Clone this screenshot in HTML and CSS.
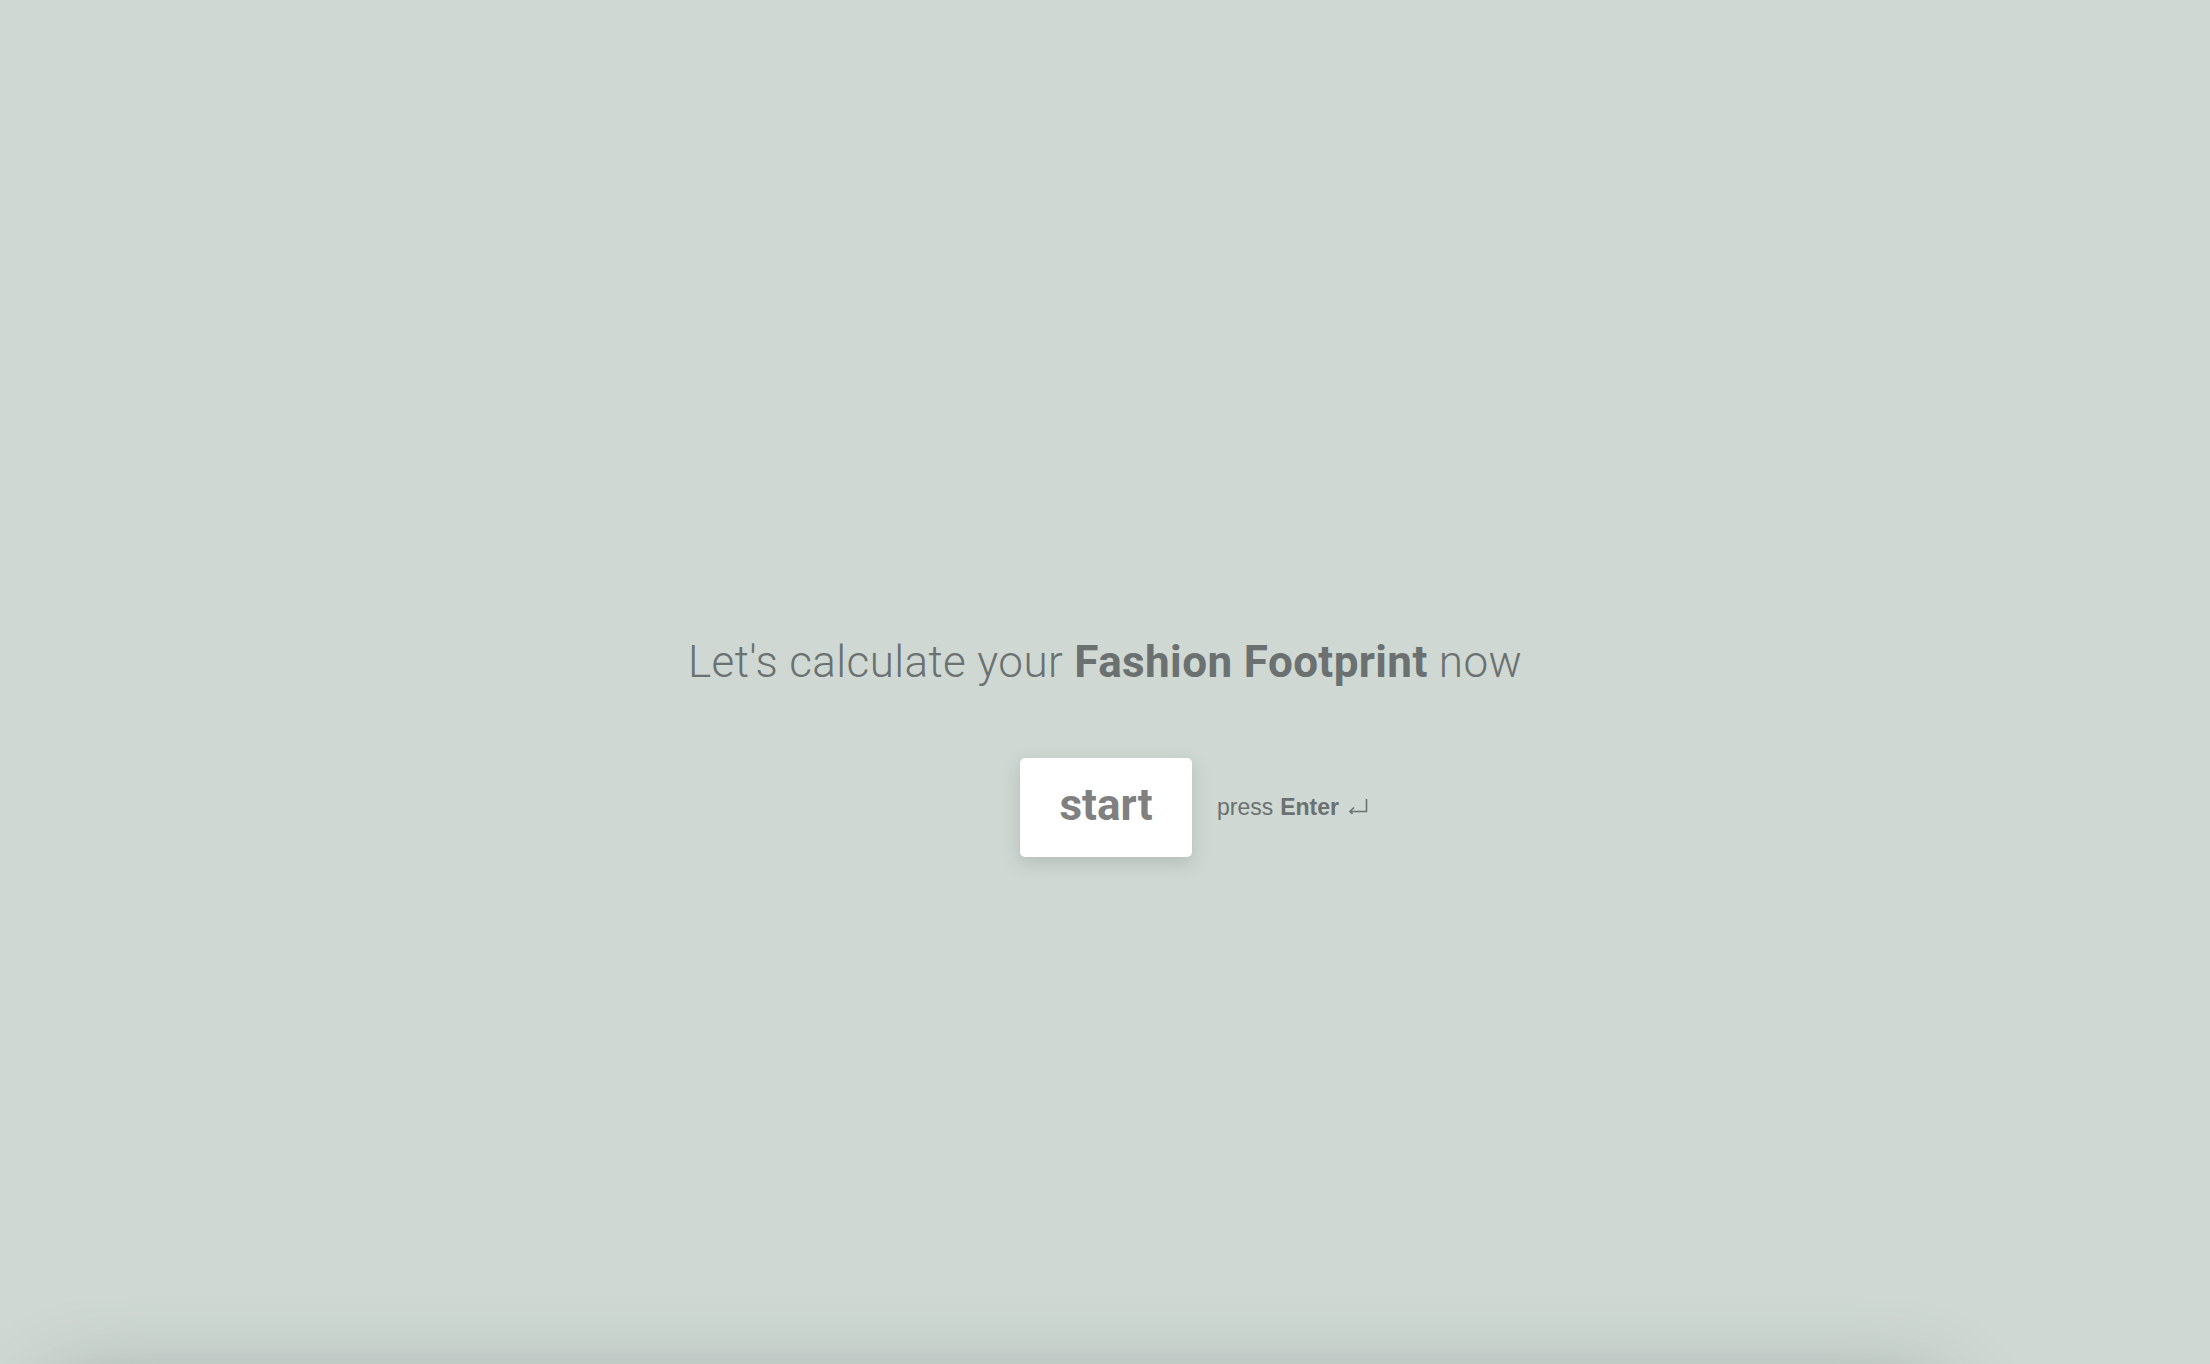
FILE: index.html
```html
<!DOCTYPE html>
<html lang="en">
<head>
  <meta charset="UTF-8">
  <meta name="viewport" content="width=device-width, initial-scale=1.0">
  <title>Fashion Footprint</title>
  <link rel="stylesheet" href="styles.css">
</head>
<body>
  <main class="welcome">
    <h1 class="title">Let's calculate your <strong>Fashion Footprint</strong> now</h1>
    <div class="start-row">
      <button class="btn start">start</button>
      <p class="hint">press <strong>Enter</strong>
        <svg class="enter-icon" width="20" height="16" viewBox="0 0 20 16">
          <path d="M18.5 1v12.5H2" fill="none" stroke="currentColor" stroke-width="1.6"/>
          <path d="M6 9.5 2 13.5 6 17.5" fill="none" stroke="currentColor" stroke-width="1.6"/>
        </svg>
      </p>
    </div>
  </main>
  <div class="footer-shade"></div>
</body>
</html>
```

FILE: styles.css
```css
html, body {
  margin: 0;
  height: 100%;
}
body {
  background: #cfd8d3;
  font-family: Roboto, "Liberation Sans", sans-serif;
  overflow: hidden;
}
.welcome {
  min-height: 100vh;
  box-sizing: border-box;
  padding-top: 128px;
  display: flex;
  flex-direction: column;
  align-items: center;
  justify-content: center;
}
.title {
  margin: 0;
  font-size: 44px;
  font-weight: 300;
  line-height: 54px;
  color: #6b7170;
  letter-spacing: 0.4px;
}
.title strong {
  font-weight: 700;
}
.start-row {
  display: flex;
  align-items: center;
  margin-top: 69px;
  padding-left: 178px;
}
.btn {
  border: none;
  cursor: pointer;
}
.start {
  width: 172px;
  height: 99px;
  background: #fff;
  border-radius: 5px;
  box-shadow: 0 6px 18px rgba(80, 95, 88, 0.22);
  font-family: Roboto, "Liberation Sans", sans-serif;
  font-size: 44px;
  font-weight: 700;
  color: #808080;
  padding: 0 0 6px;
}
.hint {
  margin: 0 0 0 25px;
  font-family: "Liberation Sans", Arial, sans-serif;
  font-size: 23px;
  color: #6b7170;
  display: flex;
  align-items: center;
  gap: 7px;
}
.enter-icon {
  margin-left: 2px;
  margin-top: -4px;
}
.footer-shade {
  position: fixed;
  left: 45px;
  width: 1900px;
  top: 1385px;
  height: 200px;
  border-radius: 40px;
  box-shadow: 0 0 80px rgba(90, 105, 98, 0.45);
}
```
